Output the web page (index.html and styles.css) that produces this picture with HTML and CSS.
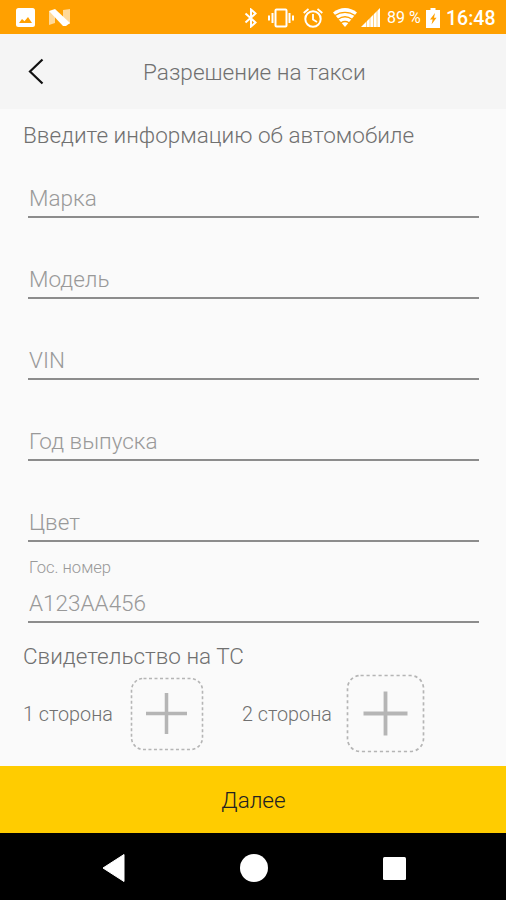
FILE: index.html
```html
<!DOCTYPE html>
<html lang="ru">
<head>
    <meta charset="UTF-8">
    <title>Разрешение на такси</title>
    <link rel="stylesheet" href="styles.css">
</head>
<body>
<div class="status-bar">
    <svg class="icon-image" width="19" height="19" viewBox="0 0 19 19">
        <rect width="19" height="19" rx="2.5" fill="#fff"/>
        <path d="M3 15l3-4 2.500 2.300 3.500-4.300 4 6z" fill="#ffa000"/>
    </svg>
    <svg class="icon-n" width="21" height="18" viewBox="0 0 21 18">
        <path d="M0 2l6 3v9l-6 2zM14 1l7-1v15l-7-3z" fill="#fff" opacity=".6"/>
        <path d="M0 2l6-2 15 14-4 3h-3z" fill="#fff"/>
    </svg>
    <svg class="icon-bt" width="14" height="20" viewBox="0 0 14 20">
        <path d="M1.500 5.500l10 9L7 18.500v-17l4.500 4-10 9" fill="none" stroke="#fff" stroke-width="2"/>
    </svg>
    <svg class="icon-vibrate" width="26" height="20" viewBox="0 0 26 20">
        <rect x="7.500" y="1.500" width="11" height="17" rx="1" fill="none" stroke="#fff" stroke-width="2"/>
        <path d="M4.500 5v10M1 7.500v5M21.500 5v10M25 7.500v5" stroke="#fff" stroke-width="2"/>
    </svg>
    <svg class="icon-alarm" width="20" height="20" viewBox="0 0 20 20">
        <circle cx="10" cy="11" r="7.700" fill="none" stroke="#fff" stroke-width="2"/>
        <path d="M10 6v5.500l4 2.500M.7 5L5.500 1M19.300 5l-4.800-4" fill="none" stroke="#fff" stroke-width="1.800"/>
    </svg>
    <svg class="icon-wifi" width="24" height="19" viewBox="0 0 24 19">
        <path d="M12 19L0 4.500C7-1.500 17-1.500 24 4.500z" fill="#fff"/>
        <path d="M2 7.500c6-4.300 14-4.300 20 0M5 11.200c4.300-3 9.700-3 14 0M8 14.700c2.500-1.500 5.500-1.500 8 0" fill="none" stroke="#ffa000" stroke-width="1.300"/>
    </svg>
    <svg class="icon-signal" width="19" height="19" viewBox="0 0 19 19">
        <path d="M0 19L19 0v19z" fill="#fff"/>
        <path d="M5.500 12v7M9 9v10M12.500 5v14M16 2v17" stroke="#ffa000" stroke-width=".5"/>
    </svg>
    <span class="charge">89 %</span>
    <svg class="icon-battery" width="14" height="20" viewBox="0 0 14 20">
        <path d="M4.500 0h5v2H14v18H0V2h4.500z" fill="#fff"/>
        <path d="M9 5l-5 6.500h2.700L5.500 16.500l5-6.700H8z" fill="#ffa000"/>
    </svg>
    <span class="clock">16:48</span>
</div>
<div class="header">
    <svg width="16" height="28" viewBox="0 0 16 28">
        <path d="M14.500 1.500L2 13.500l12.500 12" fill="none" stroke="#111" stroke-width="2.200"/>
    </svg>
    <span class="title">Разрешение на такси</span>
</div>
<div class="form">
    <div class="heading">Введите информацию об автомобиле</div>
    <div class="field"><span class="hint">Марка</span></div>
    <div class="field"><span class="hint">Модель</span></div>
    <div class="field"><span class="hint">VIN</span></div>
    <div class="field"><span class="hint">Год выпуска</span></div>
    <div class="field"><span class="hint">Цвет</span></div>
    <div class="field">
        <span class="label">Гос. номер</span>
        <span class="hint">А123АА456</span>
    </div>
    <div class="heading heading-doc">Свидетельство на ТС</div>
    <div class="photos">
        <span class="side">1 сторона</span>
        <svg class="add-first" width="74" height="74" viewBox="0 0 74 74">
            <rect x="1.500" y="1.500" width="71" height="71" rx="12" fill="none" stroke="#b5b5b5" stroke-width="1.600" stroke-dasharray="3 2.500"/>
            <path d="M16 36.500h41M36.500 16v41" stroke="#b5b5b5" stroke-width="3.500"/>
        </svg>
        <span class="side">2 сторона</span>
        <svg class="add-second" width="79" height="79" viewBox="0 0 79 79">
            <rect x="1.500" y="1.500" width="76" height="76" rx="13" fill="none" stroke="#b5b5b5" stroke-width="1.700" stroke-dasharray="3.200 2.800"/>
            <path d="M17.500 39.500h44M39.500 17.500v44" stroke="#b5b5b5" stroke-width="3.800"/>
        </svg>
    </div>
</div>
<div class="next">Далее</div>
<div class="nav-bar">
    <svg width="23" height="28" viewBox="0 0 23 28"><path d="M1 14L22 .5v27z" fill="#fff" stroke="#fff" stroke-linejoin="round"/></svg>
    <svg width="28" height="28" viewBox="0 0 28 28"><circle cx="14" cy="14" r="14" fill="#fff"/></svg>
    <svg width="23" height="23" viewBox="0 0 23 23"><rect width="23" height="23" rx="1.500" fill="#fff"/></svg>
</div>
</body>
</html>
```
FILE: styles.css
```css
* {
    box-sizing: border-box;
}

body {
    margin: 0;
    width: 506px;
    height: 900px;
    overflow: hidden;
    display: flex;
    flex-direction: column;
    background-color: #fafafa;
    font-family: Roboto, sans-serif;
    font-weight: 300;
    white-space: nowrap;
}

svg {
    display: block;
    flex: none;
}

.status-bar {
    display: flex;
    align-items: center;
    height: 34px;
    padding: 1px 0 0 16px;
    background-color: #ffa000;
    color: #ffffff;
}

.icon-n {
    margin-left: 14px;
}

.icon-bt {
    margin-left: 174px;
}

.icon-vibrate {
    margin-left: 10px;
}

.icon-alarm {
    margin-left: 9px;
}

.icon-wifi {
    margin-left: 10px;
}

.icon-signal {
    margin-left: 4px;
}

.charge {
    width: 39px;
    padding-left: 7px;
    font-size: 16px;
    font-weight: 400;
}

.icon-battery {
    margin-left: 7px;
}

.clock {
    margin-left: 6px;
    font-size: 19.5px;
    font-weight: 500;
    padding-top: 2px;
}

.header {
    display: flex;
    align-items: center;
    height: 75px;
    padding-left: 28px;
    background-color: #f5f5f5;
}

.title {
    margin-left: 98px;
    padding: 1px 0 0 1px;
    font-size: 22.6px;
    color: #707070;
}

.form {
    height: 657px;
    padding: 12px 23px 0;
    color: #707070;
}

.heading {
    height: 28px;
    font-size: 22.5px;
    line-height: 28px;
}

.field {
    display: flex;
    flex-direction: column;
    justify-content: flex-end;
    height: 81px;
    margin: 0 4px 0 5px;
    padding-bottom: 5px;
    border-bottom: 2px solid #8c8c8c;
    color: #999999;
}

.heading + .field {
    height: 69px;
}

.hint {
    padding-left: 1px;
    font-size: 22.5px;
    line-height: 26px;
}

.label {
    padding: 0 0 12px 1px;
    font-size: 16.6px;
    line-height: 20px;
}

.heading-doc {
    margin-top: 19px;
}

.photos {
    display: flex;
    align-items: center;
    height: 79px;
    margin-top: 4px;
}

.side {
    width: 90px;
    font-size: 19.8px;
    padding-top: 2px;
}

.add-first {
    margin: 0 38px 0 17px;
}

.add-second {
    margin-left: 14px;
}

.next {
    display: flex;
    align-items: center;
    justify-content: center;
    height: 67px;
    padding-left: 1px;
    background-color: #ffcc00;
    color: #222222;
    font-size: 22.5px;
}

.nav-bar {
    flex: 1;
    display: flex;
    align-items: center;
    justify-content: space-between;
    padding: 3px 100px 0 102px;
    background-color: #000000;
}
```
